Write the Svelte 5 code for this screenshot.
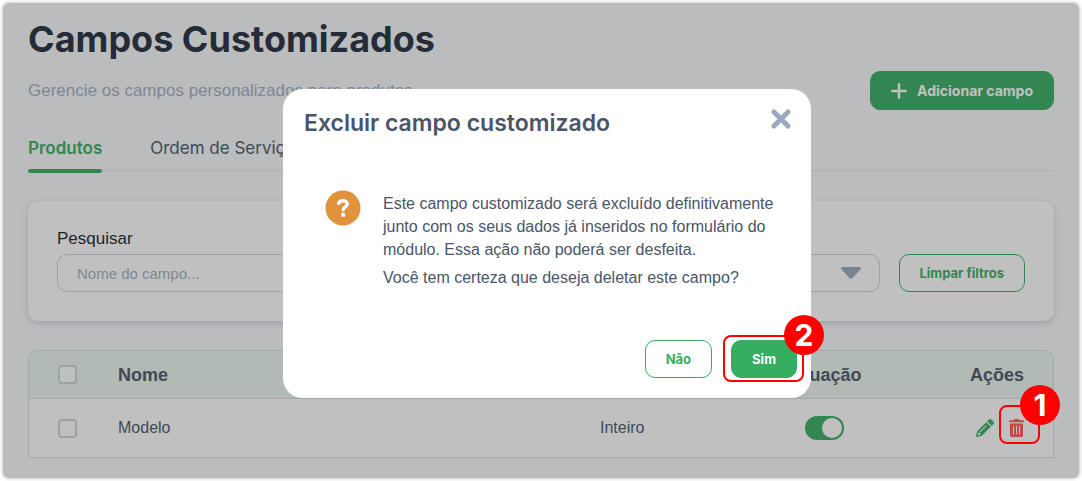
<script lang="ts">
	type Field = { id: number; name: string; type: string; active: boolean; selected: boolean };

	const tabs = ["Produtos", "Ordem de Serviço"];

	let activeTab = $state("Produtos");
	let search = $state("");
	let status = $state("");
	let fields: Field[] = $state([
		{ id: 1, name: "Modelo", type: "Inteiro", active: true, selected: false },
	]);
	let toDelete: number | null = $state(1);

	const allSelected = $derived(fields.length > 0 && fields.every((f) => f.selected));

	function toggleAll() {
		const value = !allSelected;
		for (const f of fields) f.selected = value;
	}

	function clearFilters() {
		search = "";
		status = "";
	}

	function confirmDelete() {
		fields = fields.filter((f) => f.id !== toDelete);
		toDelete = null;
	}
</script>

<div class="frame">
	<main>
		<h1>Campos Customizados</h1>
		<div class="intro">
			<p>Gerencie os campos personalizados para produtos.</p>
			<button class="btn solid add" type="button">
				<svg width="16" height="16" viewBox="0 0 16 16" aria-hidden="true">
					<path d="M8 1.200v13.600M1.200 8h13.600" stroke="currentColor" stroke-width="2.400" stroke-linecap="round" />
				</svg>
				Adicionar campo
			</button>
		</div>

		<nav class="tabs">
			{#each tabs as tab}
				<button type="button" class:active={tab === activeTab} onclick={() => (activeTab = tab)}>{tab}</button>
			{/each}
		</nav>

		<section class="filters">
			<div class="field">
				<label for="search">Pesquisar</label>
				<input id="search" type="text" placeholder="Nome do campo..." bind:value={search} />
			</div>
			<div class="field select">
				<select aria-label="Situação" bind:value={status}>
					<option value=""></option>
					<option value="on">Ativo</option>
					<option value="off">Inativo</option>
				</select>
				<svg width="20" height="12" viewBox="0 0 20 12" aria-hidden="true">
					<path d="M1.500 0h17c1.300 0 2 1.400 1 2.300l-8 8.600c-.9.9-2.100.9-3 0l-8-8.600C-.5 1.400.2 0 1.500 0z" fill="#9aa9bf" />
				</svg>
			</div>
			<button class="btn outline" type="button" onclick={clearFilters}>Limpar filtros</button>
		</section>

		<table>
			<thead>
				<tr>
					<th class="check"><input type="checkbox" aria-label="Selecionar todos" checked={allSelected} onchange={toggleAll} /></th>
					<th>Nome</th>
					<th class="type">Tipo</th>
					<th class="status">Situação</th>
					<th class="actions">Ações</th>
				</tr>
			</thead>
			<tbody>
				{#each fields as field (field.id)}
					<tr>
						<td class="check"><input type="checkbox" aria-label={field.name} bind:checked={field.selected} /></td>
						<td>{field.name}</td>
						<td>{field.type}</td>
						<td class="status"><input class="switch" type="checkbox" role="switch" aria-label="Situação" bind:checked={field.active} /></td>
						<td class="actions">
							<div>
								<button class="icon edit" type="button" aria-label="Editar">
									<svg width="18" height="18" viewBox="0 0 18 18" aria-hidden="true">
										<path fill-rule="evenodd" d="M10.200 3.200 14.800 7.800 5.500 17 .7 17.900c-.4.1-.7-.2-.6-.6L1 12.500zM10 6.200 3.500 12.600l.6.600L10.600 6.800zM2.300 13.600 1.700 16.300 4.400 15.700 4.300 13.900z" />
										<path d="M11.100 2.300 12.700.7c.8-.8 2-.8 2.800 0l1.800 1.800c.8.8.8 2 0 2.800l-1.600 1.600z" />
									</svg>
								</button>
								<button class="icon trash" type="button" aria-label="Excluir" onclick={() => (toDelete = field.id)}>
									<svg width="15" height="18" viewBox="0 0 15 18" aria-hidden="true">
										<path fill-rule="evenodd" d="M.5 1.200H4.500L5 .4C5.200.1 5.400 0 5.700 0h3.600c.3 0 .5.1.7.4l.5.800h4c.3 0 .5.200.5.500v1c0 .3-.2.500-.5.500H.5C.2 3.200 0 3 0 2.700v-1c0-.3.2-.5.5-.5zM1 4.500h13v11.800c0 .9-.7 1.700-1.700 1.700H2.700C1.700 18 1 17.200 1 16.300zM4 6.800v8.700h1V6.800zM7 6.800v8.700h1V6.800zM10 6.800v8.700h1V6.800z" />
									</svg>
									<span class="mark"><span class="step">1</span></span>
								</button>
							</div>
						</td>
					</tr>
				{/each}
			</tbody>
		</table>
	</main>

	{#if toDelete !== null}
		<div class="overlay">
			<div class="modal" role="dialog" aria-modal="true" aria-labelledby="modal-title">
				<header>
					<h2 id="modal-title">Excluir campo customizado</h2>
					<button class="icon close" type="button" aria-label="Fechar" onclick={() => (toDelete = null)}>
						<svg width="20" height="20" viewBox="0 0 20 20" aria-hidden="true">
							<path d="M3 3l14 14M17 3 3 17" stroke="currentColor" stroke-width="5" stroke-linecap="round" />
						</svg>
					</button>
				</header>
				<div class="message">
					<svg width="36" height="36" viewBox="0 0 36 36" aria-hidden="true">
						<circle cx="18" cy="18" r="17.500" fill="#e0923d" />
						<path d="M13.500 13.300c1-1.800 2.500-2.500 4.500-2.500 2.500 0 4.300 1.300 4.300 3.300 0 3-4.100 2.700-4.100 5.600" fill="none" stroke="#fff" stroke-width="3.400" stroke-linecap="round" />
						<circle cx="18.200" cy="24.800" r="2.200" fill="#fff" />
					</svg>
					<div>
						<p>Este campo customizado será excluído definitivamente junto com os seus dados já inseridos no formulário do módulo. Essa ação não poderá ser desfeita.</p>
						<p>Você tem certeza que deseja deletar este campo?</p>
					</div>
				</div>
				<footer>
					<button class="btn outline" type="button" onclick={() => (toDelete = null)}>Não</button>
					<button class="btn solid confirm" type="button" onclick={confirmDelete}>
						Sim
						<span class="mark"><span class="step">2</span></span>
					</button>
				</footer>
			</div>
		</div>
	{/if}
</div>

<style>
	:global(body) {
		background: #fff;
	}

	.frame {
		--green: #36ad60;
		--display: Inter, "Liberation Sans", sans-serif;
		position: relative;
		margin: 3px;
		border-radius: 6px;
		background: #f7fafc;
		box-shadow: 0 0 3px 1px #ccc;
		color: #4a5568;
		font: 16px/24px "Liberation Sans", Arial, sans-serif;
	}

	.frame * {
		box-sizing: border-box;
	}

	main {
		padding: 14px 25px 20px;
	}

	h1, h2, p {
		margin: 0;
	}

	h1 {
		color: #222b3b;
		font: 700 36px/44px var(--display);
	}

	.intro {
		display: flex;
		align-items: center;
		justify-content: space-between;
		margin-top: 10px;
		color: #a0aec0;
		font-size: 17px;
	}

	button {
		cursor: pointer;
	}

	.btn {
		position: relative;
		height: 38px;
		padding: 0 20px;
		border: 1px solid var(--green);
		border-radius: 10px;
		font: 700 13px/20px var(--display);
		white-space: nowrap;
	}

	.solid {
		background: var(--green);
		color: #fff;
	}

	.outline {
		background: transparent;
		color: var(--green);
	}

	.add {
		display: flex;
		align-items: center;
		gap: 10px;
		height: 39px;
		font-size: 14px;
	}

	.tabs {
		display: flex;
		gap: 48px;
		margin-top: 24px;
		box-shadow: inset 0 -2px #f7fafc, inset 0 -3px #e2e8f0;
	}

	.tabs button {
		position: relative;
		padding: 0 0 11px;
		border: 0;
		background: none;
		color: #4a5568;
		font: 400 17px/28px var(--display);
	}

	.tabs .active {
		color: var(--green);
		font-weight: 600;
	}

	.tabs .active::after {
		position: absolute;
		inset: auto 0 0;
		height: 4px;
		border-radius: 2px;
		background: var(--green);
		content: "";
	}

	.filters {
		display: flex;
		align-items: flex-end;
		gap: 19px;
		margin-top: 28px;
		padding: 26px 29px 29px;
		border-radius: 10px;
		background: #fff;
		box-shadow: 0 2px 6px #ccd3dc;
	}

	.field {
		flex: 1;
	}

	.field label {
		display: block;
		margin-bottom: 3px;
		color: #1a202c;
		font-size: 17px;
	}

	.field input,
	.field select {
		display: block;
		width: 100%;
		height: 38px;
		padding: 0 19px;
		border: 1px solid #cbd5e0;
		border-radius: 10px;
		background: #fff;
		color: #4a5568;
		font: 15px "Liberation Sans", Arial, sans-serif;
	}

	.field input::placeholder {
		color: #a0aec0;
	}

	.select {
		display: grid;
		align-items: center;
	}

	.select > * {
		grid-area: 1 / 1;
	}

	.select select {
		appearance: none;
	}

	.select svg {
		justify-self: end;
		margin-right: 19px;
		pointer-events: none;
	}

	table {
		width: 100%;
		margin-top: 29px;
		border: 1px solid #d3dbe6;
		border-radius: 10px 10px 0 0;
		border-spacing: 0;
		table-layout: fixed;
		background: #fff;
	}

	th, td {
		padding: 0;
		text-align: left;
	}

	th {
		height: 48px;
		border-bottom: 1px solid #d3dbe6;
		background: #eaf7ee;
		font-size: 18px;
	}

	th:first-child {
		border-top-left-radius: 9px;
	}

	th:last-child {
		border-top-right-radius: 9px;
	}

	td {
		height: 58px;
	}

	.check {
		width: 89px;
		padding-left: 29px;
	}

	.type {
		width: 170px;
	}

	.status {
		width: 108px;
		text-align: center;
	}

	.actions {
		width: 175px;
		padding-right: 29px;
		text-align: right;
	}

	.actions div {
		display: flex;
		justify-content: flex-end;
		gap: 15px;
	}

	table input {
		display: block;
		width: 19px;
		height: 19px;
		margin: 0;
		border: 2px solid #cbd5e0;
		border-radius: 4px;
		background: #fff;
		appearance: none;
	}

	table input:checked {
		border-color: var(--green);
		background: var(--green);
	}

	table .switch {
		display: grid;
		align-items: center;
		width: 39px;
		height: 24px;
		margin: 0 auto;
		border-radius: 12px;
	}

	.switch::before {
		width: 20px;
		height: 20px;
		border-radius: 50%;
		background: #fff;
		content: "";
	}

	.switch:checked::before {
		justify-self: end;
	}

	.icon {
		display: block;
		position: relative;
		padding: 0;
		border: 0;
		background: none;
	}

	.icon svg {
		display: block;
		fill: currentColor;
	}

	.edit {
		color: var(--green);
	}

	.trash {
		color: #f75b52;
	}

	/* red guide boxes, drawn over the page and the dialog */
	.mark {
		position: absolute;
		z-index: 3;
		border: 2px solid #f00;
		border-radius: 8px;
		pointer-events: none;
	}

	.trash .mark {
		inset: -14px -16px -7px -10px;
	}

	.confirm .mark {
		inset: -6px -8px -5px -9px;
	}

	.step {
		position: absolute;
		top: -22px;
		right: -22px;
		width: 40px;
		height: 40px;
		border-radius: 50%;
		background: #f00;
		color: #fff;
		font: 700 30px/40px Inter, sans-serif;
		text-align: center;
	}

	.overlay {
		display: flex;
		position: absolute;
		inset: 0;
		align-items: flex-start;
		justify-content: center;
		padding: 86px 0 0 12px;
		border-radius: 6px;
		background: rgba(47, 47, 47, 0.3);
	}

	.modal {
		width: 528px;
		padding: 20px 14px 20px 21px;
		border-radius: 20px;
		background: #fff;
	}

	.modal header {
		display: flex;
		align-items: flex-start;
		justify-content: space-between;
		padding-right: 6px;
	}

	h2 {
		font: 600 23px/28px var(--display);
	}

	.close {
		color: #9aa9bf;
	}

	.message {
		display: flex;
		gap: 22px;
		margin-top: 53px;
		padding: 0 6px 0 21px;
		line-height: 23px;
	}

	.message svg {
		flex: none;
	}

	.message div {
		padding-top: 2px;
	}

	.message p + p {
		margin-top: 5px;
	}

	.modal footer {
		display: flex;
		justify-content: flex-end;
		gap: 19px;
		margin-top: 51px;
	}
</style>
